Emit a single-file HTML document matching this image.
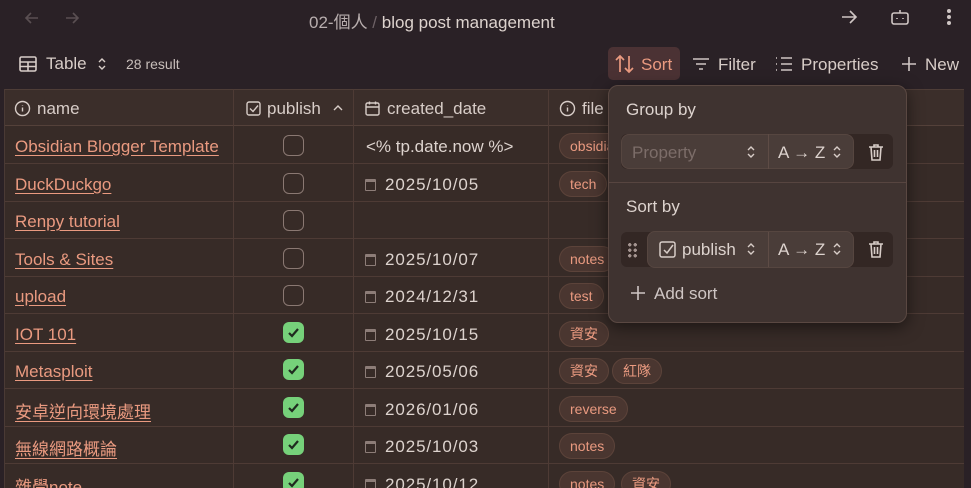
<!DOCTYPE html>
<html><head><meta charset="utf-8"><style>
*{box-sizing:border-box;margin:0;padding:0}
html,body{width:971px;height:488px;overflow:hidden}
body{background:#2a2126;font-family:"Liberation Sans","Noto Sans CJK TC",sans-serif;color:#ddd3ce;position:relative}
.abs{position:absolute}
.t{font-size:16px;color:#d8cdc8;white-space:nowrap}
.tbl{position:absolute;left:4px;top:89px;width:960px;height:399px;overflow:hidden;background:#372b27;border-left:1px solid #4a3a35}
.hdr{position:absolute;left:0;top:0;width:960px;height:37px;background:#3b2e2a;border-top:1px solid #4e3d37;border-bottom:1px solid #54413a}
.hdr .t{font-size:17px}
.row{position:absolute;left:0;width:960px;height:38px;border-bottom:1px solid #4e3b35}
.vl{position:absolute;top:0;width:1px;height:400px;background:#4e3b35}
.nm{position:absolute;left:10px;top:11px;font-size:17px;color:#ea9a80;text-decoration:underline;text-underline-offset:3px;white-space:nowrap}
.cb{position:absolute;left:279px;top:9px;width:21px;height:21px;border:1.5px solid #8a7872;border-radius:6px}
.ck{position:absolute;left:279px;top:8px;width:21px;height:21px;background:#76d17a;border-radius:6px}
.dt{position:absolute;left:360px;top:11px;font-size:17px;color:#ddd3ce;white-space:nowrap;letter-spacing:.9px}
.cal{display:inline-block;width:11px;height:12px;border:1.5px solid #8d7d78;border-top-width:3px;border-radius:1px;margin-right:9px;vertical-align:-1px}
.tag{position:absolute;top:7px;height:26px;padding:0 10px;border-radius:13px;background:#4a3630;border:1px solid #5c433a;color:#ea9a80;font-size:14px;line-height:24px;white-space:nowrap}
.pop{position:absolute;left:608px;top:85px;width:299px;height:238px;background:#3f3330;border:1px solid #5a4842;border-radius:10px;box-shadow:0 4px 16px rgba(0,0,0,.5)}
.pt{font-size:17px;color:#ddd3ce;position:absolute;white-space:nowrap}
svg{position:absolute}
</style></head><body>
<svg style="left:22px;top:8px" width="20" height="20" viewBox="0 0 20 20" fill="none" stroke="#5a4f52" stroke-width="1.6"><path d="M16 10H4M9 5l-5 5 5 5"/></svg>
<svg style="left:62px;top:8px" width="20" height="20" viewBox="0 0 20 20" fill="none" stroke="#5a4f52" stroke-width="1.6"><path d="M4 10h12M11 5l5 5-5 5"/></svg>
<div class="abs t" style="left:309px;top:8px;color:#b8aeae;font-size:17px">02-個人 <span style="color:#6e6266">/</span> <span style="color:#ddd3ce">blog post management</span></div>
<svg style="left:839px;top:7px" width="20" height="20" viewBox="0 0 20 20" fill="none" stroke="#cfc6c4" stroke-width="1.6"><path d="M3 10h14M11 4l6 6-6 6"/></svg>
<svg style="left:889px;top:6px" width="22" height="22" viewBox="0 0 22 22" fill="none" stroke="#cfc6c4" stroke-width="1.6"><rect x="3" y="7" width="16" height="11" rx="2"/><path d="M11 7V4M8 12v1M14 12v1"/></svg>
<div class="abs" style="left:947px;top:9px;width:4px;height:4px;background:#cfc6c4;border-radius:50%;box-shadow:0 6px 0 #cfc6c4,0 12px 0 #cfc6c4"></div>
<svg style="left:18px;top:54px" width="20" height="20" viewBox="0 0 20 20" fill="none" stroke="#d8cdc8" stroke-width="1.6"><rect x="2" y="3" width="16" height="14" rx="1.5"/><path d="M2 8h16M2 12.5h16M10 8v9"/></svg>
<div class="abs t" style="left:46px;top:54px;font-size:17px">Table</div>
<svg style="left:96px;top:56px" width="12" height="16" viewBox="0 0 12 16" fill="none" stroke="#d8cdc8" stroke-width="1.4"><path d="M3 6l3-3 3 3M3 10l3 3 3-3"/></svg>
<div class="abs" style="left:126px;top:56px;font-size:14px;color:#c8beba">28 result</div>
<div class="abs" style="left:608px;top:47px;width:72px;height:33px;background:#4b3234;border-radius:5px"></div>
<svg style="left:614px;top:53px" width="22" height="22" viewBox="0 0 22 22" fill="none" stroke="#ea9a80" stroke-width="1.7"><path d="M6 19V3M2 7l4-4 4 4M15 3v16M11 15l4 4 4-4"/></svg>
<div class="abs t" style="left:641px;top:55px;color:#ea9a80;font-size:17px">Sort</div>
<svg style="left:691px;top:54px" width="20" height="20" viewBox="0 0 20 20" fill="none" stroke="#cfc6c4" stroke-width="1.6"><path d="M2 5h16M5 10h10M8 15h4"/></svg>
<div class="abs t" style="left:718px;top:55px;font-size:17px">Filter</div>
<svg style="left:774px;top:54px" width="20" height="20" viewBox="0 0 20 20" fill="none" stroke="#cfc6c4" stroke-width="1.6"><path d="M2 4h1M2 10h1M2 16h1M7 4h11M7 10h11M7 16h11"/></svg>
<div class="abs t" style="left:801px;top:55px;font-size:17px">Properties</div>
<svg style="left:899px;top:54px" width="20" height="20" viewBox="0 0 20 20" fill="none" stroke="#cfc6c4" stroke-width="1.6"><path d="M10 3v14M3 10h14"/></svg>
<div class="abs t" style="left:925px;top:55px;font-size:17px">New</div>

<div class="tbl">
 <div class="hdr">
  <svg style="left:9px;top:10px" width="17" height="17" viewBox="0 0 17 17" fill="none" stroke="#d8cdc8" stroke-width="1.4"><circle cx="8.5" cy="8.5" r="7"/><path d="M8.5 7.5v4M8.5 5v.5"/></svg>
  <div class="t abs" style="left:32px;top:9px">name</div>
  <svg style="left:240px;top:10px" width="17" height="17" viewBox="0 0 17 17" fill="none" stroke="#d8cdc8" stroke-width="1.4"><rect x="2" y="2" width="13" height="13" rx="2"/><path d="M5 8.5l3 3 5-6"/></svg>
  <div class="t abs" style="left:262px;top:9px">publish</div>
  <svg style="left:327px;top:12px" width="12" height="12" viewBox="0 0 12 12" fill="none" stroke="#d8cdc8" stroke-width="1.4"><path d="M2 8l4-4 4 4"/></svg>
  <svg style="left:359px;top:10px" width="17" height="17" viewBox="0 0 17 17" fill="none" stroke="#d8cdc8" stroke-width="1.4"><rect x="2" y="3" width="13" height="12" rx="1.5"/><path d="M2 7h13M5.5 1.5v3M11.5 1.5v3"/></svg>
  <div class="t abs" style="left:382px;top:9px">created_date</div>
  <svg style="left:554px;top:10px" width="17" height="17" viewBox="0 0 17 17" fill="none" stroke="#d8cdc8" stroke-width="1.4"><circle cx="8.5" cy="8.5" r="7"/><path d="M8.5 7.5v4M8.5 5v.5"/></svg>
  <div class="t abs" style="left:577px;top:9px">file</div>
 </div>
 <div class="vl" style="left:228px"></div><div class="vl" style="left:348px"></div><div class="vl" style="left:543px"></div>

 <div class="row" style="top:37px"><div class="nm">Obsidian Blogger Template</div><div class="cb" style="left:278px"></div><div class="dt" style="left:361px;letter-spacing:0">&lt;% tp.date.now %&gt;</div><div class="tag" style="left:554px">obsidian</div></div>
 <div class="row" style="top:75px"><div class="nm">DuckDuckgo</div><div class="cb" style="left:278px"></div><div class="dt"><span class="cal"></span>2025/10/05</div><div class="tag" style="left:554px">tech</div></div>
 <div class="row" style="top:112px"><div class="nm">Renpy tutorial</div><div class="cb" style="left:278px"></div></div>
 <div class="row" style="top:150px"><div class="nm">Tools &amp; Sites</div><div class="cb" style="left:278px"></div><div class="dt"><span class="cal"></span>2025/10/07</div><div class="tag" style="left:554px">notes</div></div>
 <div class="row" style="top:187px"><div class="nm">upload</div><div class="cb" style="left:278px"></div><div class="dt"><span class="cal"></span>2024/12/31</div><div class="tag" style="left:554px">test</div></div>
 <div class="row" style="top:225px"><div class="nm">IOT 101</div><div class="ck" style="left:278px"><svg style="left:4px;top:4px" width="13" height="13" viewBox="0 0 13 13" fill="none" stroke="#1f2a1f" stroke-width="2.2"><path d="M2 7l3 3 6-7"/></svg></div><div class="dt"><span class="cal"></span>2025/10/15</div><div class="tag" style="left:554px">資安</div></div>
 <div class="row" style="top:262px"><div class="nm">Metasploit</div><div class="ck" style="left:278px"><svg style="left:4px;top:4px" width="13" height="13" viewBox="0 0 13 13" fill="none" stroke="#1f2a1f" stroke-width="2.2"><path d="M2 7l3 3 6-7"/></svg></div><div class="dt"><span class="cal"></span>2025/05/06</div><div class="tag" style="left:554px">資安</div><div class="tag" style="left:607px">紅隊</div></div>
 <div class="row" style="top:300px"><div class="nm" style="top:9px">安卓逆向環境處理</div><div class="ck" style="left:278px"><svg style="left:4px;top:4px" width="13" height="13" viewBox="0 0 13 13" fill="none" stroke="#1f2a1f" stroke-width="2.2"><path d="M2 7l3 3 6-7"/></svg></div><div class="dt"><span class="cal"></span>2026/01/06</div><div class="tag" style="left:554px">reverse</div></div>
 <div class="row" style="top:337px"><div class="nm" style="top:9px">無線網路概論</div><div class="ck" style="left:278px"><svg style="left:4px;top:4px" width="13" height="13" viewBox="0 0 13 13" fill="none" stroke="#1f2a1f" stroke-width="2.2"><path d="M2 7l3 3 6-7"/></svg></div><div class="dt"><span class="cal"></span>2025/10/03</div><div class="tag" style="left:554px">notes</div></div>
 <div class="row" style="top:375px"><div class="nm" style="top:9px">雜學note</div><div class="ck" style="left:278px"><svg style="left:4px;top:4px" width="13" height="13" viewBox="0 0 13 13" fill="none" stroke="#1f2a1f" stroke-width="2.2"><path d="M2 7l3 3 6-7"/></svg></div><div class="dt"><span class="cal"></span>2025/10/12</div><div class="tag" style="left:554px">notes</div><div class="tag" style="left:616px">資安</div></div>
</div>

<div class="pop">
 <div class="pt" style="left:17px;top:14px">Group by</div>
 <div class="abs" style="left:12px;top:48px;width:272px;height:35px;background:#332724;border-radius:6px"></div>
 <div class="abs" style="left:12px;top:48px;width:233px;height:35px;background:#4a3d39;border:1px solid #564640;border-radius:8px"></div>
 <div class="abs" style="left:159px;top:48px;width:1px;height:35px;background:#5e4c46"></div>
 <div class="pt" style="left:23px;top:57px;color:#7c6d69">Property</div>
 <svg style="left:136px;top:58px" width="12" height="16" viewBox="0 0 12 16" fill="none" stroke="#d8cdc8" stroke-width="1.4"><path d="M3 6l3-3 3 3M3 10l3 3 3-3"/></svg>
 <div class="pt" style="left:169px;top:57px">A → Z</div>
 <svg style="left:222px;top:58px" width="12" height="16" viewBox="0 0 12 16" fill="none" stroke="#d8cdc8" stroke-width="1.4"><path d="M3 6l3-3 3 3M3 10l3 3 3-3"/></svg>
 <svg style="left:257px;top:56px" width="20" height="20" viewBox="0 0 20 20" fill="none" stroke="#d8cdc8" stroke-width="1.6"><path d="M3 5h14M8 5V3h4v2M5 5l1 13h8l1-13M8.5 8v7M11.5 8v7"/></svg>
 <div class="abs" style="left:0;top:96px;width:297px;height:1px;background:#574540"></div>
 <div class="pt" style="left:17px;top:111px">Sort by</div>
 <div class="abs" style="left:12px;top:146px;width:272px;height:35px;background:#332724;border-radius:6px"></div>
 <div class="abs" style="left:18px;top:156px;width:11px;height:16px;background:radial-gradient(circle,#a49490 1.6px,transparent 1.8px) 0 0/5.5px 5.5px"></div>
 <div class="abs" style="left:38px;top:145px;width:207px;height:37px;background:#4a3d39;border:1px solid #564640;border-radius:8px"></div>
 <div class="abs" style="left:159px;top:146px;width:1px;height:35px;background:#5e4c46"></div>
 <svg style="left:49px;top:154px" width="20" height="20" viewBox="0 0 20 20" fill="none" stroke="#d8cdc8" stroke-width="1.5"><rect x="2" y="2" width="15" height="15" rx="2"/><path d="M6 10l3 3 6-8"/></svg>
 <div class="pt" style="left:73px;top:154px">publish</div>
 <svg style="left:136px;top:155px" width="12" height="16" viewBox="0 0 12 16" fill="none" stroke="#d8cdc8" stroke-width="1.4"><path d="M3 6l3-3 3 3M3 10l3 3 3-3"/></svg>
 <div class="pt" style="left:169px;top:154px">A → Z</div>
 <svg style="left:222px;top:155px" width="12" height="16" viewBox="0 0 12 16" fill="none" stroke="#d8cdc8" stroke-width="1.4"><path d="M3 6l3-3 3 3M3 10l3 3 3-3"/></svg>
 <svg style="left:257px;top:153px" width="20" height="20" viewBox="0 0 20 20" fill="none" stroke="#d8cdc8" stroke-width="1.6"><path d="M3 5h14M8 5V3h4v2M5 5l1 13h8l1-13M8.5 8v7M11.5 8v7"/></svg>
 <svg style="left:20px;top:198px" width="18" height="18" viewBox="0 0 18 18" fill="none" stroke="#cfc6c4" stroke-width="1.6"><path d="M9 2v14M2 9h14"/></svg>
 <div class="pt" style="left:45px;top:198px;color:#cfc6c4">Add sort</div>
</div>
</body></html>
